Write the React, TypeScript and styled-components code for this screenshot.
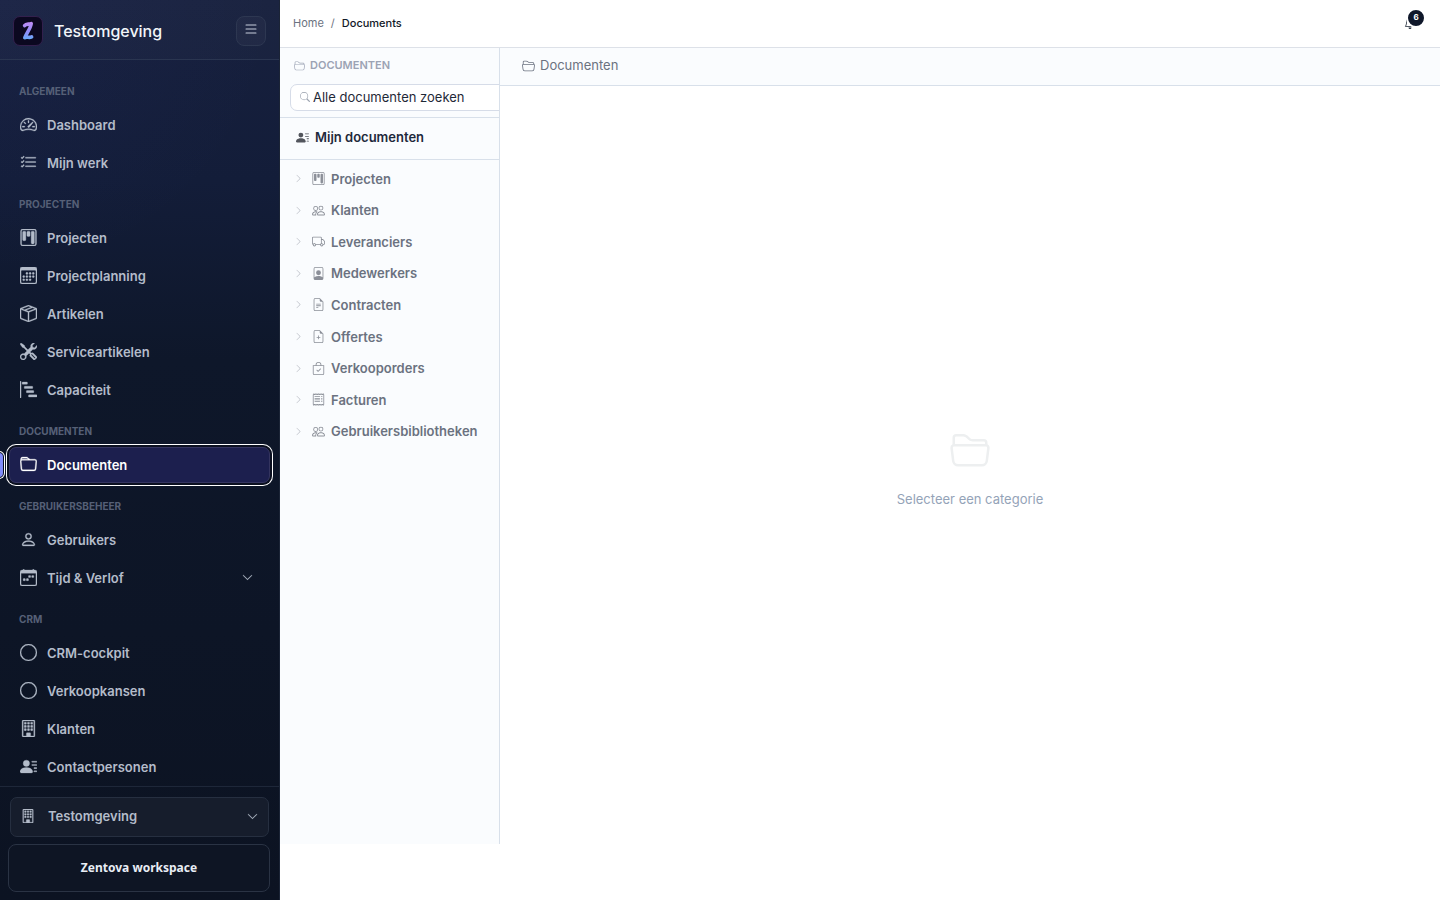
import React from "react";
import styled, { createGlobalStyle, css } from "styled-components";
import type { IconType } from "react-icons";
import {
  BsBagCheck,
  BsBarChartSteps,
  BsBell,
  BsBoxSeam,
  BsBuilding,
  BsCalendar3,
  BsCalendarWeek,
  BsChevronDown,
  BsChevronRight,
  BsCircle,
  BsFileEarmarkPlus,
  BsFileEarmarkText,
  BsFilePerson,
  BsFolder,
  BsFolder2Open,
  BsKanban,
  BsList,
  BsListCheck,
  BsPeople,
  BsPerson,
  BsPersonLinesFill,
  BsReceipt,
  BsSearch,
  BsSpeedometer2,
  BsTools,
  BsTruck,
} from "react-icons/bs";

const GlobalStyle = createGlobalStyle`
  *, *::before, *::after { box-sizing: border-box; }
  body {
    margin: 0;
    background: #fff;
    color: #1e293b;
    font-family: Inter, "Liberation Sans", sans-serif;
    font-size: 13px;
    line-height: 20px;
  }
  button, input { font: inherit; color: inherit; }
  a { color: inherit; text-decoration: none; }
  ul, ol { list-style: none; margin: 0; padding: 0; }
  svg { display: block; flex: none; }
`;

const Shell = styled.div`
  display: flex;
  min-height: 100vh;
`;

/* ---------- sidebar ---------- */

const Sidebar = styled.aside`
  display: flex;
  flex-direction: column;
  flex: none;
  width: 280px;
  height: 100vh;
  color: #b4bcca;
  border-right: 1px solid #1b2436;
  background:
    radial-gradient(circle at 0 0, rgba(99, 102, 241, 0.04), transparent 280px),
    linear-gradient(180deg, #17203e 0, #131d39 180px, #0e172a 360px, #0c1322 100%);
`;

const SidebarHeader = styled.header`
  display: flex;
  align-items: center;
  gap: 11px;
  height: 60px;
  padding: 2px 13px 0;
  border-bottom: 1px solid #2a3550;
  background: rgba(255, 255, 255, 0.02);
`;

const Logo = styled.span`
  display: grid;
  place-items: center;
  width: 30px;
  height: 30px;
  border: 1px solid #33204d;
  border-radius: 7px;
  background: #0b0820;
`;

const Brand = styled.span`
  flex: 1;
  color: #f1f5f9;
  font-size: 16px;
  font-weight: 500;
`;

const MenuButton = styled.button`
  display: grid;
  place-items: center;
  width: 30px;
  height: 30px;
  padding: 0 0 3px;
  border: 1px solid #2d3751;
  border-radius: 8px;
  background: rgba(255, 255, 255, 0.03);
  color: #c7cedb;
  font-size: 16px;
`;

const Nav = styled.nav`
  flex: 1;
  min-height: 0;
  padding: 8px 9px 0;
  overflow-y: auto;
  scrollbar-width: none;
`;

const SectionTitle = styled.h2`
  margin: 0;
  padding: 15px 10px 8px;
  color: #566077;
  font-size: 10px;
  font-weight: 700;
  line-height: 16px;
  text-transform: uppercase;
`;

const NavList = styled.ul`
  display: grid;
  gap: 2px;
`;

const NavLink = styled.a<{ $active?: boolean }>`
  position: relative;
  display: flex;
  align-items: center;
  gap: 10px;
  height: 36px;
  padding: 0 16px 0 10px;
  border: 1px solid transparent;
  border-radius: 7px;
  font-weight: 600;

  svg {
    width: 17px;
    height: 17px;
    margin-bottom: 1px;
    stroke-width: 0.3;
  }
  svg:last-child:not(:first-child) { width: 11px; height: 11px; }

  ${(p) =>
    p.$active &&
    css`
      color: #fff;
      background: #1c1f4e;
      border-color: #34345f;
      box-shadow: 0 0 0 2px #0b1020, 0 0 0 3px #fff;

      &::before {
        content: "";
        position: absolute;
        left: -12px;
        width: 5px;
        height: 24px;
        border-radius: 0 4px 4px 0;
        background: #818cf8;
        box-shadow: 0 0 0 1px #0b1020, 0 0 0 2px #fff;
      }
    `}
`;

const NavLabel = styled.span`
  flex: 1;
`;

const SidebarFooter = styled.footer`
  display: grid;
  gap: 7px;
  padding: 10px 9px 8px 8px;
  border-top: 1px solid #1e2739;
`;

const TenantButton = styled.button`
  display: flex;
  align-items: center;
  gap: 13px;
  height: 40px;
  margin: 0 1px 0 2px;
  padding: 0 10px 2px;
  border: 1px solid #262f40;
  border-radius: 7px;
  background: #161d2c;
  font-weight: 600;
  text-align: left;

  svg { width: 14px; height: 14px; stroke-width: 0.3; }
  svg:last-child { width: 11px; height: 11px; }
`;

const WorkspaceButton = styled.button`
  height: 48px;
  border: 1px solid #2a3344;
  border-radius: 8px;
  background: #0e1524;
  color: #e8edf5;
  font-family: "Noto Sans", "Open Sans", sans-serif;
  font-size: 12px;
  font-weight: 700;
`;

/* ---------- page ---------- */

const Page = styled.div`
  display: flex;
  flex-direction: column;
  flex: 1;
  min-width: 0;
  padding-bottom: 56px;
`;

const TopBar = styled.header`
  display: flex;
  align-items: center;
  justify-content: space-between;
  height: 48px;
  padding: 0 24px 2px 13px;
  border-bottom: 1px solid #dde1e8;
`;

const Crumbs = styled.ol`
  display: flex;
  gap: 7px;
  color: #6b7280;
  font-size: 11px;

  li + li::before {
    content: "/";
    margin-right: 7px;
  }
`;

const CurrentCrumb = styled.span`
  color: #111827;
  font-weight: 500;
`;

const BellButton = styled.button`
  position: relative;
  width: 12px;
  height: 12px;
  padding: 0;
  border: 0;
  background: none;
  color: #1f2937;
  font-size: 12px;
`;

const Badge = styled.span`
  position: absolute;
  left: 2px;
  bottom: 1px;
  width: 20px;
  height: 20px;
  border: 2px solid #fff;
  border-radius: 10px;
  background: #0f172a;
  color: #fff;
  font-size: 8px;
  font-weight: 700;
  line-height: 15px;
  text-align: center;
`;

const Workspace = styled.main`
  display: flex;
  flex: 1;
`;

const TreePanel = styled.section`
  flex: none;
  width: 220px;
  overflow: hidden;
  border-right: 1px solid #d8e0ea;
  background: #fafcfe;
`;

const TreeHeader = styled.div`
  height: 70px;
  padding: 7px 0 0 10px;
  border-bottom: 1px solid #d8e0ea;
`;

const TreeTitle = styled.h1`
  display: flex;
  align-items: center;
  gap: 5px;
  margin: 0 0 9px;
  padding-left: 4px;
  color: #9ca3b4;
  font-size: 11px;
  font-weight: 600;
  text-transform: uppercase;
`;

const SearchBox = styled.label`
  display: flex;
  align-items: center;
  gap: 3px;
  width: 240px;
  height: 27px;
  padding: 0 0 2px 9px;
  border: 1px solid #d6dce8;
  border-radius: 7px;
  background: #fff;
  color: #9ca3af;
  font-size: 10px;
`;

const SearchInput = styled.input`
  flex: 1;
  min-width: 0;
  padding: 0;
  border: 0;
  outline: 0;
  background: none;
  font-size: 13px;

  &::placeholder { color: #1f2937; opacity: 1; }
`;

const MyDocuments = styled.a`
  display: flex;
  align-items: center;
  gap: 6px;
  height: 42px;
  padding: 0 16px 3px;
  border-bottom: 1px solid #d8e0ea;
  color: #1e293b;
  font-weight: 600;

  svg { color: #52555c; }
`;

const Tree = styled.ul`
  display: grid;
  grid-auto-rows: 1fr;
  height: 284px;
  margin-top: 3px;
`;

const TreeItem = styled.button`
  display: flex;
  align-items: center;
  gap: 6px;
  width: 100%;
  height: 100%;
  padding: 0 14px;
  border: 0;
  background: none;
  color: #6b7280;
  font-weight: 600;
  text-align: left;

  svg { width: 13px; height: 13px; color: #8b8f98; }
  svg:first-child { width: 9px; height: 9px; margin-right: 3px; color: #b6bac2; }
`;

const Content = styled.section`
  display: flex;
  flex-direction: column;
  flex: 1;
  min-width: 0;
`;

const ContentHeader = styled.div`
  display: flex;
  align-items: center;
  gap: 5px;
  height: 38px;
  padding: 0 22px 3px;
  border-bottom: 1px solid #d8e0ea;
  background: #fafcfe;
  color: #6b7280;
`;

const EmptyState = styled.div`
  display: flex;
  flex-direction: column;
  align-items: center;
  justify-content: center;
  flex: 1;
  gap: 20px;
  padding-top: 7px;
  color: #94a3b8;

  svg { width: 40px; height: 40px; color: #edeff0; }
`;

type Item = { icon: IconType; label: string; active?: boolean; expandable?: boolean };

const sections: { title: string; items: Item[] }[] = [
  {
    title: "Algemeen",
    items: [
      { icon: BsSpeedometer2, label: "Dashboard" },
      { icon: BsListCheck, label: "Mijn werk" },
    ],
  },
  {
    title: "Projecten",
    items: [
      { icon: BsKanban, label: "Projecten" },
      { icon: BsCalendar3, label: "Projectplanning" },
      { icon: BsBoxSeam, label: "Artikelen" },
      { icon: BsTools, label: "Serviceartikelen" },
      { icon: BsBarChartSteps, label: "Capaciteit" },
    ],
  },
  { title: "Documenten", items: [{ icon: BsFolder, label: "Documenten", active: true }] },
  {
    title: "Gebruikersbeheer",
    items: [
      { icon: BsPerson, label: "Gebruikers" },
      { icon: BsCalendarWeek, label: "Tijd & Verlof", expandable: true },
    ],
  },
  {
    title: "CRM",
    items: [
      { icon: BsCircle, label: "CRM-cockpit" },
      { icon: BsCircle, label: "Verkoopkansen" },
      { icon: BsBuilding, label: "Klanten" },
      { icon: BsPersonLinesFill, label: "Contactpersonen" },
    ],
  },
];

const categories: Item[] = [
  { icon: BsKanban, label: "Projecten" },
  { icon: BsPeople, label: "Klanten" },
  { icon: BsTruck, label: "Leveranciers" },
  { icon: BsFilePerson, label: "Medewerkers" },
  { icon: BsFileEarmarkText, label: "Contracten" },
  { icon: BsFileEarmarkPlus, label: "Offertes" },
  { icon: BsBagCheck, label: "Verkooporders" },
  { icon: BsReceipt, label: "Facturen" },
  { icon: BsPeople, label: "Gebruikersbibliotheken" },
];

function LogoMark() {
  return (
    <svg width="14" height="20" viewBox="0 0 14 20" fill="none" aria-hidden="true">
      <defs>
        <linearGradient id="mark" x1="7" y1="0" x2="7" y2="20" gradientUnits="userSpaceOnUse">
          <stop offset="0" stopColor="#c58cf6" />
          <stop offset="0.55" stopColor="#8f8df8" />
          <stop offset="1" stopColor="#5fb2fa" />
        </linearGradient>
      </defs>
      <path
        d="M3.6 4.6C5.2 2.6 7.6 3.6 10.2 2.6C9.6 7.4 6.2 11 3.8 16.6C6.4 15.4 8 17.2 10.6 15.8"
        stroke="url(#mark)"
        strokeWidth="3.6"
        strokeLinecap="round"
        strokeLinejoin="round"
      />
    </svg>
  );
}

export default function App() {
  return (
    <>
      <GlobalStyle />
      <Shell>
        <Sidebar>
          <SidebarHeader>
            <Logo>
              <LogoMark />
            </Logo>
            <Brand>Testomgeving</Brand>
            <MenuButton type="button" aria-label="Menu inklappen">
              <BsList />
            </MenuButton>
          </SidebarHeader>
          <Nav>
            {sections.map((section) => (
              <React.Fragment key={section.title}>
                <SectionTitle>{section.title}</SectionTitle>
                <NavList>
                  {section.items.map(({ icon: Icon, label, active, expandable }) => (
                    <li key={label}>
                      <NavLink href="#" $active={active} aria-current={active ? "page" : undefined}>
                        <Icon />
                        <NavLabel>{label}</NavLabel>
                        {expandable && <BsChevronDown />}
                      </NavLink>
                    </li>
                  ))}
                </NavList>
              </React.Fragment>
            ))}
          </Nav>
          <SidebarFooter>
            <TenantButton type="button">
              <BsBuilding />
              <NavLabel>Testomgeving</NavLabel>
              <BsChevronDown />
            </TenantButton>
            <WorkspaceButton type="button">Zentova workspace</WorkspaceButton>
          </SidebarFooter>
        </Sidebar>
        <Page>
          <TopBar>
            <nav aria-label="Kruimelpad">
              <Crumbs>
                <li>
                  <a href="#">Home</a>
                </li>
                <li>
                  <CurrentCrumb aria-current="page">Documents</CurrentCrumb>
                </li>
              </Crumbs>
            </nav>
            <BellButton type="button" aria-label="Meldingen">
              <BsBell />
              <Badge>6</Badge>
            </BellButton>
          </TopBar>
          <Workspace>
            <TreePanel>
              <TreeHeader>
                <TreeTitle>
                  <BsFolder2Open />
                  Documenten
                </TreeTitle>
                <SearchBox>
                  <BsSearch />
                  <SearchInput
                    type="text"
                    placeholder="Alle documenten zoeken"
                    aria-label="Alle documenten zoeken"
                  />
                </SearchBox>
              </TreeHeader>
              <MyDocuments href="#">
                <BsPersonLinesFill />
                Mijn documenten
              </MyDocuments>
              <Tree>
                {categories.map(({ icon: Icon, label }) => (
                  <li key={label}>
                    <TreeItem type="button">
                      <BsChevronRight />
                      <Icon />
                      {label}
                    </TreeItem>
                  </li>
                ))}
              </Tree>
            </TreePanel>
            <Content>
              <ContentHeader>
                <BsFolder2Open />
                Documenten
              </ContentHeader>
              <EmptyState>
                <BsFolder2Open />
                Selecteer een categorie
              </EmptyState>
            </Content>
          </Workspace>
        </Page>
      </Shell>
    </>
  );
}
